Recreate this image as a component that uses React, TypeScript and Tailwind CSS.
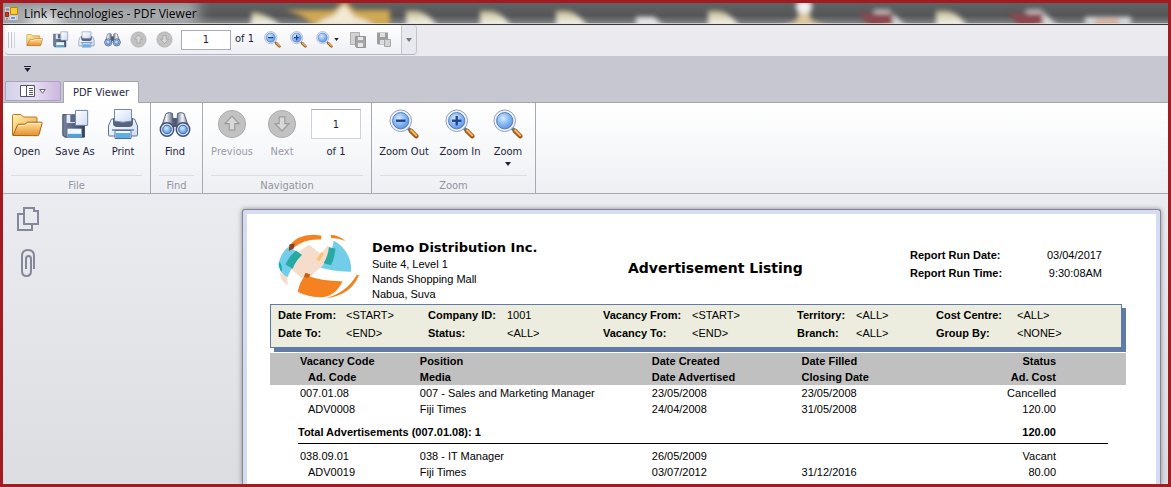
import React, { useState } from 'react';

type IconProps = { className?: string };

// Gradients shared by the toolbar and ribbon icons
function IconDefs() {
  return (
    <svg className="absolute h-0 w-0" aria-hidden="true">
      <defs>
        <linearGradient id="folderBack" x1="0" y1="0" x2="1" y2="1">
          <stop offset="0" stopColor="#fff3a8" />
          <stop offset="1" stopColor="#eba048" />
        </linearGradient>
        <linearGradient id="folder" x1="0" y1="0" x2="0" y2="1">
          <stop offset="0" stopColor="#ffe3a0" />
          <stop offset="1" stopColor="#e58f2c" />
        </linearGradient>
        <linearGradient id="steel" x1="0" y1="0" x2="1" y2="0">
          <stop offset="0" stopColor="#75849f" />
          <stop offset="1" stopColor="#34435f" />
        </linearGradient>
        <linearGradient id="paper" x1="0" y1="0" x2="1" y2="1">
          <stop offset="0" stopColor="#ffffff" />
          <stop offset="1" stopColor="#cfdcf5" />
        </linearGradient>
        <linearGradient id="tube" x1="0" y1="0" x2="1" y2="0">
          <stop offset="0" stopColor="#5e6b84" />
          <stop offset="0.45" stopColor="#f4f6fb" />
          <stop offset="1" stopColor="#4b5873" />
        </linearGradient>
        <radialGradient id="lens" cx="0.4" cy="0.35" r="0.7">
          <stop offset="0" stopColor="#d6ecff" />
          <stop offset="0.5" stopColor="#8dbdf2" />
          <stop offset="1" stopColor="#5b8fe0" />
        </radialGradient>
      </defs>
    </svg>
  );
}

function OpenIcon({ className }: IconProps) {
  return (
    <svg viewBox="0 0 32 32" className={className} aria-hidden="true">
      <path d="M1.500 27V7.500q0-1 1-1h7.500l2.500 2.500h12.500q1 0 1 1v16.500Z" fill="url(#folderBack)" stroke="#b57828" />
      <path d="M2 27.500 6.500 17q.4-.8 1.200-.8h6l3-2h13.500q1.200 0 .9 1.200L28 26.500q-.3 1.200-1.500 1.200Z" fill="url(#folder)" stroke="#a8641b" />
      <path d="M8 17.500h6.200l3-2h12.500" fill="none" stroke="#fff3c8" />
    </svg>
  );
}

function SaveAsIcon({ className }: IconProps) {
  return (
    <svg viewBox="0 0 32 32" className={className} aria-hidden="true">
      <path d="M3 6h23v24H5l-2-2Z" fill="url(#steel)" stroke="#33415c" />
      <path d="M7 6h11v9H7Z" fill="#e3ebf8" />
      <path d="M11 6h5v8h-5Z" fill="#5a6a86" />
      <path d="M8 21h15v9H8Z" fill="#f3f8ff" />
      <path d="M8 26.500h15V30H8Z" fill="#4aa3e0" />
      <path d="M16.500 1.500h13v16h-13Z" fill="url(#paper)" stroke="#6a7da3" />
    </svg>
  );
}

function PrintIcon({ className }: IconProps) {
  return (
    <svg viewBox="0 0 32 32" className={className} aria-hidden="true">
      <path d="M4 12q0-1 1-1h22q1 0 1 1l2.500 6v9q0 1-1 1h-27q-1 0-1-1v-9Z" fill="url(#paper)" stroke="#5f7196" />
      <path d="M6 10h20v5q0 4-4 4H10q-4 0-4-4Z" fill="#56637e" />
      <path d="M7.500 1.500h17V13q-8.500 2.500-17 0Z" fill="url(#paper)" stroke="#7587ad" />
      <path d="M5 22h22" stroke="#8b9dc0" strokeWidth="2" />
      <path d="M8 22.500h16v8H8Z" fill="#f5faff" stroke="#4b6ea8" />
      <path d="M9 25h14v5H9Z" fill="#5faee8" />
    </svg>
  );
}

function FindIcon({ className }: IconProps) {
  return (
    <svg viewBox="0 0 32 32" className={className} aria-hidden="true">
      <path d="M12 10h8v9h-8Z" fill="#4d5a75" />
      <path d="M7 5.500q3.500-2 6.500 0l1 16H1.500Z" fill="url(#tube)" stroke="#56637e" />
      <path d="M18.500 5.500q3-2 6.500 0l5.500 16h-13Z" fill="url(#tube)" stroke="#56637e" />
      <circle cx="8" cy="21.500" r="6.700" fill="#dfe8f7" stroke="#42506d" strokeWidth="1.500" />
      <circle cx="24" cy="21.500" r="6.700" fill="#dfe8f7" stroke="#42506d" strokeWidth="1.500" />
      <circle cx="8" cy="21.500" r="4.300" fill="url(#lens)" stroke="#2e5fb0" />
      <circle cx="24" cy="21.500" r="4.300" fill="url(#lens)" stroke="#2e5fb0" />
    </svg>
  );
}

function ArrowIcon({ className, down }: IconProps & { down?: boolean }) {
  return (
    <svg viewBox="0 0 32 32" className={className} aria-hidden="true">
      <circle cx="16" cy="16" r="14.500" fill="#c2c2c2" stroke="#a9a9a9" />
      <path
        d={down ? 'M13 8.500h6v7h4.500L16 23.500 8.500 15.500H13Z' : 'M13 22.500h6v-7h4.500L16 7.500 8.500 15.500H13Z'}
        fill="#d8d8d8"
        stroke="#9d9d9d"
        strokeWidth="1.300"
      />
    </svg>
  );
}

function LensIcon({ className, sign }: IconProps & { sign?: 'plus' | 'minus' }) {
  return (
    <svg viewBox="0 0 32 32" className={className} aria-hidden="true">
      <path d="m20 20 4 4" stroke="#66738f" strokeWidth="3.500" />
      <path d="m23.500 23.500 5.500 5.500" stroke="#a05c1e" strokeWidth="5" strokeLinecap="round" />
      <path d="m23.500 22.700 5.500 5.500" stroke="#f7bd62" strokeWidth="2" strokeLinecap="round" />
      <circle cx="12.500" cy="12.500" r="11.500" fill="#eef3fb" stroke="#8b97b0" />
      <circle cx="12.500" cy="12.500" r="8.700" fill="url(#lens)" stroke="#4d78c4" />
      {sign && <path d="M7.500 12.500h10" stroke="#1f3f94" strokeWidth="2.500" />}
      {sign === 'plus' && <path d="M12.500 7.500v10" stroke="#1f3f94" strokeWidth="2.500" />}
    </svg>
  );
}

function CopySaveIcon({ className }: IconProps) {
  return (
    <svg viewBox="0 0 16 16" className={className} aria-hidden="true">
      <path d="M.5.500h9v12h-9Z" fill="#d2d2d2" stroke="#b0b0b0" />
      <path d="M5.500 4.500h10v11h-9l-1-1Z" fill="#a5a5a5" stroke="#929292" />
      <path d="M8 5h5v3H8ZM8 11h5v4H8Z" fill="#e6e6e6" />
    </svg>
  );
}

function SavePageIcon({ className }: IconProps) {
  return (
    <svg viewBox="0 0 16 16" className={className} aria-hidden="true">
      <path d="M1 .5h11v12H2l-1-1Z" fill="#9d9d9d" />
      <path d="M4 1h5v4H4ZM4 8h5v4H4Z" fill="#dedede" />
      <path d="M8.500 7.500h6v7h-6Z" fill="#d2d2d2" stroke="#a6a6a6" />
    </svg>
  );
}

function Caret({ className }: IconProps) {
  return (
    <svg viewBox="0 0 6 4" className={className} aria-hidden="true">
      <path d="M0 0h6L3 4Z" fill="currentColor" />
    </svg>
  );
}

function AppIcon() {
  return (
    <svg viewBox="0 0 13 13" className="h-[13px] w-[13px]" aria-hidden="true">
      <path d="M0 0h13v13H0Z" fill="#c9c9c9" />
      <path d="M5.500.500h7v7h-7Z" fill="#f8c839" stroke="#b98408" />
      <path d="M.5 5.500h3v4h-3Z" fill="#d8331f" stroke="#9e1d10" />
      <path d="M5.500 9.500h5v3h-5Z" fill="#5e92e8" stroke="#d5e0f3" />
      <path d="M1 11h2v1.500H1ZM1 1.500h3v2H1Z" fill="#8c8c8c" />
    </svg>
  );
}

// Blurred desktop that shows through the glass title bar
function GlassBackdrop() {
  const flags = [403, 477, 553, 705, 933];
  return (
    <svg viewBox="0 0 1165 21" preserveAspectRatio="none" className="absolute inset-0 h-full w-full" aria-hidden="true">
      <defs>
        <filter id="soft" x="-5%" y="-50%" width="110%" height="200%">
          <feGaussianBlur stdDeviation="2.500" />
        </filter>
        <filter id="glow" x="-30%" y="-100%" width="160%" height="300%">
          <feGaussianBlur stdDeviation="7" />
        </filter>
        <linearGradient id="glass" x1="0" y1="0" x2="0" y2="1">
          <stop offset="0" stopColor="#606364" />
          <stop offset="0.6" stopColor="#545657" />
          <stop offset="1" stopColor="#858687" />
        </linearGradient>
        <linearGradient id="flag" x1="0" y1="0" x2="0" y2="1">
          <stop offset="0" stopColor="#c5bb90" />
          <stop offset="0.7" stopColor="#f2f0e8" />
        </linearGradient>
      </defs>
      <rect width="1165" height="21" fill="url(#glass)" />
      <rect x="-10" y="-4" width="205" height="32" fill="#a6a9ab" filter="url(#glow)" />
      <ellipse cx="42" cy="20" rx="18" ry="7" fill="#ffffff" filter="url(#glow)" />
      <g filter="url(#soft)">
        <path d="M249 9q18 2 30 16h-32Z" fill="url(#flag)" />
        <path d="M281 7h49l12-9 10 9h35v17h-76q-8-12-30-17Z" fill="#cfa852" />
        <path d="M310 24q10-9 20-11l11-12 11 13q14 3 20 10Z" fill="#f3ead4" />
        {flags.map((x) => (
          <path key={x} d={`M${x} 8h12q14 4 20 18h-32Z`} fill="url(#flag)" />
        ))}
        <path d="M633 14h18l12 12h-30Z" fill="#e4e4e4" />
        <circle cx="801" cy="4" r="8" fill="#f1f1f1" />
        <path d="M796 10h10l3 8 20 8h-54l18-8Z" fill="#dcc79d" />
        <path d="M870 7h16l20 19h-24Z" fill="#dcdcdc" />
        <path d="M856 10h34v13h-24Z" fill="#8c4750" />
        <path d="M1022 7h16l20 19h-24Z" fill="#dcdcdc" />
        <path d="M1006 10h34v13h-24Z" fill="#8c4750" />
        <path d="M1082 14h46v9h-46Z" fill="#d5dbdc" />
        <path d="M1092 15h24v8h-24Z" fill="#d9b3a2" />
      </g>
      <path d="M0 20.500h1165" stroke="#e2e2e2" strokeOpacity="0.7" />
    </svg>
  );
}

function GlobeLogo() {
  return (
    <svg viewBox="834 115 248 198" className="h-[65px] w-[82px] shrink-0" role="img" aria-label="Demo Distribution">
      <path d="M890 172 928 148l34 27 23-24 20 14-42 52-33 28-25 3-35-28Z" fill="#f5dccb" />
      <path d="M838 232q2 24 24 40v-25Z" fill="#f5dccb" />
      <path d="M866 152 905 180Q878 207 862 247 840 238 835 208q4-34 31-56Z" fill="#73cde8" />
      <path d="M836 198q12 14 8 32-10-10-8-32Z" fill="#00b2c4" />
      <path d="m888 165 18 14q-20 18-28 42l-22-13q10-24 32-43Z" fill="#27aaa4" />
      <path d="M866 152Q900 108 966 120l-2 12q-48-4-82 24Z" fill="#f58220" />
      <path d="m868 147 16-3-3 15-15 8Z" fill="#8a4223" />
      <path d="M993 118q25 0 45 18-20-9-43-9Z" fill="#f58220" />
      <path d="M1003 135q55 32 53 95-48 0-93-12 34-33 40-83Z" fill="#73cde8" />
      <path d="m988 155 20 4q-2 28-13 51l-23-6q14-23 16-49Z" fill="#27aaa4" />
      <path d="m965 170 8 5-13 23-10-5Z" fill="#fbc474" />
      <path d="M916 240q54 20 114 19-24 50-70 49-40-2-67-17 5-27 23-51Z" fill="#f58220" />
      <path d="m917 233 15 5-7 11-13-4Z" fill="#c75d16" />
      <path d="M1073 240h7q-25 64-105 71 64-14 98-71Z" fill="#f58220" />
    </svg>
  );
}

function SmallButton({ label, disabled, children }: { label: string; disabled?: boolean; children: React.ReactNode }) {
  return (
    <button type="button" aria-label={label} disabled={disabled} className="flex h-6 w-[26px] items-center justify-center">
      {children}
    </button>
  );
}

function RibbonButton({ label, width, disabled, menu, children }: {
  label: string;
  width: string;
  disabled?: boolean;
  menu?: boolean;
  children: React.ReactNode;
}) {
  return (
    <button
      type="button"
      disabled={disabled}
      className={`flex flex-col items-center whitespace-nowrap disabled:text-[#9a9aac] ${width}`}
    >
      {children}
      <span className="mt-1 leading-4">{label}</span>
      {menu && <Caret className="mt-[2px] h-1 w-[6px]" />}
    </button>
  );
}

function RibbonGroup({ title, className, children }: { title: string; className?: string; children: React.ReactNode }) {
  return (
    <section className="flex h-[90px] flex-col border-r border-[#a9a9b4]">
      <div className={`flex grow items-start pt-[5px] ${className ?? ''}`}>{children}</div>
      <h2 className="mx-2 h-[18px] border-t border-[#dcdde3] text-center leading-[19px] text-[#93939f]">{title}</h2>
    </section>
  );
}

const filters = [
  [
    ['Date From:', '<START>'],
    ['Company ID:', '1001'],
    ['Vacancy From:', '<START>'],
    ['Territory:', '<ALL>'],
    ['Cost Centre:', '<ALL>'],
  ],
  [
    ['Date To:', '<END>'],
    ['Status:', '<ALL>'],
    ['Vacancy To:', '<END>'],
    ['Branch:', '<ALL>'],
    ['Group By:', '<NONE>'],
  ],
];

const vacancies = [
  {
    code: '007.01.08',
    position: '007 - Sales and Marketing Manager',
    created: '23/05/2008',
    filled: '23/05/2008',
    status: 'Cancelled',
    ad: { code: 'ADV0008', media: 'Fiji Times', advertised: '24/04/2008', closing: '31/05/2008', cost: '120.00' },
    total: '120.00',
  },
  {
    code: '038.09.01',
    position: '038 - IT Manager',
    created: '26/05/2009',
    filled: '',
    status: 'Vacant',
    ad: { code: 'ADV0019', media: 'Fiji Times', advertised: '03/07/2012', closing: '31/12/2016', cost: '80.00' },
    total: '',
  },
];

function ReportTable() {
  return (
    <table className="mt-[5px] w-full table-fixed border-collapse text-left">
      <colgroup>
        <col className="w-[17.5%]" />
        <col className="w-[27.1%]" />
        <col className="w-[17.5%]" />
        <col className="w-[17.5%]" />
        <col />
      </colgroup>
      <thead className="bg-[#c0c0c0]">
        <tr className="h-4">
          <th className="pl-[30px]">Vacancy Code</th>
          <th>Position</th>
          <th>Date Created</th>
          <th>Date Filled</th>
          <th className="pr-[70px] text-right">Status</th>
        </tr>
        <tr className="h-4">
          <th className="pl-[38px]">Ad. Code</th>
          <th>Media</th>
          <th>Date Advertised</th>
          <th>Closing Date</th>
          <th className="pr-[70px] text-right">Ad. Cost</th>
        </tr>
      </thead>
      {vacancies.map((v) => (
        <tbody key={v.code}>
          <tr className="h-4">
            <td className="pl-[30px]">{v.code}</td>
            <td>{v.position}</td>
            <td>{v.created}</td>
            <td>{v.filled}</td>
            <td className="pr-[70px] text-right">{v.status}</td>
          </tr>
          <tr className="h-4">
            <td className="pl-[38px]">{v.ad.code}</td>
            <td>{v.ad.media}</td>
            <td>{v.ad.advertised}</td>
            <td>{v.ad.closing}</td>
            <td className="pr-[70px] text-right">{v.ad.cost}</td>
          </tr>
          {v.total && (
            <>
              <tr className="h-[26px] font-bold">
                <td colSpan={4} className="pt-1 pl-7">Total Advertisements ({v.code}): 1</td>
                <td className="pt-1 pr-[70px] text-right">{v.total}</td>
              </tr>
              <tr>
                <td colSpan={5} className="pr-[18px] pb-1 pl-7">
                  <hr className="border-black" />
                </td>
              </tr>
            </>
          )}
        </tbody>
      ))}
    </table>
  );
}

function ReportPage() {
  return (
    <article className="mt-[15px] mr-[7px] min-w-0 grow rounded-t-[3px] border border-b-0 border-[#85858c] bg-[#d5dbf3] px-1 pt-1 shadow-[0_0_5px_#8a8a92]">
      <div className="h-full bg-white pt-5 pr-[30px] pl-[23px] font-['Liberation_Sans',Arial,sans-serif] text-[11px] leading-[15px] text-black">
        <header className="flex h-[70px] items-start pl-2">
          <GlobeLogo />
          <div className="ml-3 w-64 pt-1">
            <h1 className="font-['DejaVu_Sans',Verdana,sans-serif] text-[13px] leading-[19px] font-bold whitespace-nowrap">
              Demo Distribution Inc.
            </h1>
            <p>Suite 4, Level 1</p>
            <p>Nands Shopping Mall</p>
            <p>Nabua, Suva</p>
          </div>
          <h2 className="grow pt-[25px] font-['DejaVu_Sans',Verdana,sans-serif] text-[14px] leading-[19px] font-bold whitespace-nowrap">
            Advertisement Listing
          </h2>
          <dl className="mr-6 grid grid-cols-[96px_96px] pt-3 leading-[18px]">
            <dt className="font-bold">Report Run Date:</dt>
            <dd className="text-right">03/04/2017</dd>
            <dt className="font-bold">Report Run Time:</dt>
            <dd className="text-right">9:30:08AM</dd>
          </dl>
        </header>

        <dl className="mr-1 grid grid-cols-[68fr_82fr_79fr_96fr_89fr_105fr_59fr_80fr_81fr_104fr] border border-[#5f7ba6] bg-[#ecedde] pt-px pb-[5px] pl-[7px] leading-[18px] whitespace-nowrap shadow-[4px_4px_0_#5f7ba6]">
          {filters.flat().map(([label, value]) => (
            <React.Fragment key={label}>
              <dt className="font-bold">{label}</dt>
              <dd>{value}</dd>
            </React.Fragment>
          ))}
        </dl>

        <ReportTable />
      </div>
    </article>
  );
}

export default function App() {
  const [page, setPage] = useState('1');
  const onPage = (e: React.ChangeEvent<HTMLInputElement>) => setPage(e.target.value);

  return (
    <div className="flex h-screen flex-col overflow-hidden border-[3px] border-[#a31a20] bg-[#e9eaee] font-['DejaVu_Sans_Condensed','Noto_Sans',Tahoma,sans-serif] text-[11px] text-[#1f1f3d]">
      <IconDefs />

      {/* TITLE BAR */}
      <div className="relative h-[22px] shrink-0 border-b border-[#3a3536]">
        <GlassBackdrop />
        <div className="relative flex h-full items-center gap-[6px] pl-[2px]">
          <AppIcon />
          <span className="font-['Open_Sans','Segoe_UI',sans-serif] text-xs text-black">Link Technologies - PDF Viewer</span>
        </div>
      </div>

      {/* TOOLBAR */}
      <div className="flex h-[31px] shrink-0 bg-[#ebebef] pl-[2px]">
        <div className="mb-px flex items-center rounded border-b border-[#b4b5c0] bg-linear-to-b from-white to-[#eeeff4]">
          <div className="ml-[3px] flex gap-[2px]">
            <i className="h-4 w-px bg-[#c4c4cc]" />
            <i className="h-4 w-px bg-[#c4c4cc]" />
            <i className="h-4 w-px bg-[#d4d4dc]" />
          </div>
          <div className="ml-[6px] flex">
            <SmallButton label="Open"><OpenIcon className="h-[17px] w-[17px]" /></SmallButton>
            <SmallButton label="Save As"><SaveAsIcon className="h-[17px] w-[17px]" /></SmallButton>
            <SmallButton label="Print"><PrintIcon className="h-[17px] w-[17px]" /></SmallButton>
            <SmallButton label="Find"><FindIcon className="h-[17px] w-[17px]" /></SmallButton>
            <SmallButton label="Previous" disabled><ArrowIcon className="h-[17px] w-[17px]" /></SmallButton>
            <SmallButton label="Next" disabled><ArrowIcon down className="h-[17px] w-[17px]" /></SmallButton>
          </div>
          <input
            aria-label="Page number"
            value={page}
            onChange={onPage}
            className="ml-1 h-5 w-[50px] border border-[#a9abbb] bg-white text-center outline-none"
          />
          <span className="w-7 pl-1">of 1</span>
          <SmallButton label="Zoom Out"><LensIcon sign="minus" className="h-[17px] w-[17px]" /></SmallButton>
          <SmallButton label="Zoom In"><LensIcon sign="plus" className="h-[17px] w-[17px]" /></SmallButton>
          <button type="button" aria-label="Zoom" className="flex h-6 w-[34px] items-center gap-px pl-[5px]">
            <LensIcon className="h-[17px] w-[17px]" />
            <Caret className="h-[3px] w-[5px]" />
          </button>
          <SmallButton label="Export" disabled><CopySaveIcon className="h-4 w-4" /></SmallButton>
          <SmallButton label="Save page" disabled><SavePageIcon className="h-4 w-4" /></SmallButton>
          <button
            type="button"
            aria-label="Toolbar options"
            className="ml-1 flex h-full w-4 items-center justify-center rounded-r border-x border-[#c3c4cd] bg-[#e8e9ef] text-[#777782]"
          >
            <Caret className="h-1 w-[6px]" />
          </button>
        </div>
      </div>

      {/* QUICK ACCESS + TABS */}
      <div className="shrink-0 border-b border-[#a5a5b0] bg-[#c7c7d1]">
        <button type="button" aria-label="Customize" className="ml-[21px] flex h-[25px] flex-col items-center justify-center gap-px">
          <i className="h-px w-[7px] bg-[#1f1f2d]" />
          <Caret className="h-1 w-[7px]" />
        </button>
        <div className="flex h-[21px] items-start gap-[2px] pl-[2px]">
          <button
            type="button"
            aria-label="Application menu"
            className="flex h-5 w-14 items-center justify-center gap-1 rounded-t-[2px] border border-[#a8a4bb] bg-linear-to-r from-[#d2d0ea] via-[#e9e1f4] to-[#ccb7df]"
          >
            <svg viewBox="0 0 15 12" className="h-3 w-[15px]" aria-hidden="true">
              <path d="M.5.500h14v11H.500ZM6.500.500v11" fill="#fff" stroke="#555560" />
              <path d="M9 3.500h4M9 5.500h4M9 7.500h4M9 9.500h4" stroke="#555560" />
            </svg>
            <svg viewBox="0 0 7 5" className="h-[5px] w-[7px]" aria-hidden="true">
              <path d="M.7.500h5.600L3.500 4.200Z" fill="#fff" stroke="#666670" />
            </svg>
          </button>
          <button
            type="button"
            role="tab"
            aria-selected="true"
            className="-mb-px h-[22px] rounded-t-[2px] border border-b-0 border-[#a5a5b0] bg-white px-[9px] pt-[2px]"
          >
            PDF Viewer
          </button>
        </div>
      </div>

      {/* RIBBON */}
      <div className="flex shrink-0 border-b border-[#a9a9b4] bg-linear-to-b from-white via-[#f7f8fa] to-[#eeeff3]">
        <RibbonGroup title="File" className="pr-[3px]">
          <RibbonButton label="Open" width="w-12"><OpenIcon className="h-8 w-8" /></RibbonButton>
          <RibbonButton label="Save As" width="w-12"><SaveAsIcon className="h-8 w-8 p-px" /></RibbonButton>
          <RibbonButton label="Print" width="w-12"><PrintIcon className="h-8 w-8" /></RibbonButton>
        </RibbonGroup>
        <RibbonGroup title="Find" className="pr-[3px]">
          <RibbonButton label="Find" width="w-12"><FindIcon className="h-8 w-8" /></RibbonButton>
        </RibbonGroup>
        <RibbonGroup title="Navigation" className="pr-[10px]">
          <RibbonButton label="Previous" width="w-[58px]" disabled><ArrowIcon className="h-8 w-8 p-px" /></RibbonButton>
          <RibbonButton label="Next" width="w-[42px]" disabled><ArrowIcon down className="h-8 w-8 p-px" /></RibbonButton>
          <label className="ml-2 flex flex-col items-center">
            <input
              value={page}
              onChange={onPage}
              className="mt-px mb-px h-[30px] w-[50px] border border-[#cfd0da] border-t-[#a9a9b4] bg-white text-center outline-none"
            />
            <span className="mt-1 leading-4">of 1</span>
          </label>
        </RibbonGroup>
        <RibbonGroup title="Zoom" className="pr-[3px]">
          <RibbonButton label="Zoom Out" width="w-16"><LensIcon sign="minus" className="h-8 w-8 p-px" /></RibbonButton>
          <RibbonButton label="Zoom In" width="w-12"><LensIcon sign="plus" className="h-8 w-8 p-px" /></RibbonButton>
          <RibbonButton label="Zoom" width="w-12" menu><LensIcon className="h-8 w-8 p-px" /></RibbonButton>
        </RibbonGroup>
      </div>

      {/* DOCUMENT */}
      <main className="flex min-h-0 grow bg-linear-to-b from-[#ebecf0] to-[#dcdde1]">
        <nav className="flex w-[239px] shrink-0 flex-col items-start gap-4 pt-3 pl-[13px]">
          <button type="button" aria-label="Page thumbnails" className="text-[#85889a]">
            <svg viewBox="0 0 24 26" className="h-[26px] w-6" fill="none" stroke="currentColor" strokeWidth="2" aria-hidden="true">
              <path d="M8 8H2v16h14v-5" />
              <path d="M8 2h10v3h4v13H8Z" />
            </svg>
          </button>
          <button type="button" aria-label="Attachments" className="ml-1 text-[#85889a]">
            <svg viewBox="0 0 16 30" className="h-[30px] w-4" fill="none" stroke="currentColor" strokeWidth="2" aria-hidden="true">
              <path d="M14 21V8q0-6-6-6T2 8v15q0 5 4.500 5t4.500-5V11q0-3-2.500-3T6 11v10" />
            </svg>
          </button>
        </nav>
        <ReportPage />
      </main>
    </div>
  );
}
